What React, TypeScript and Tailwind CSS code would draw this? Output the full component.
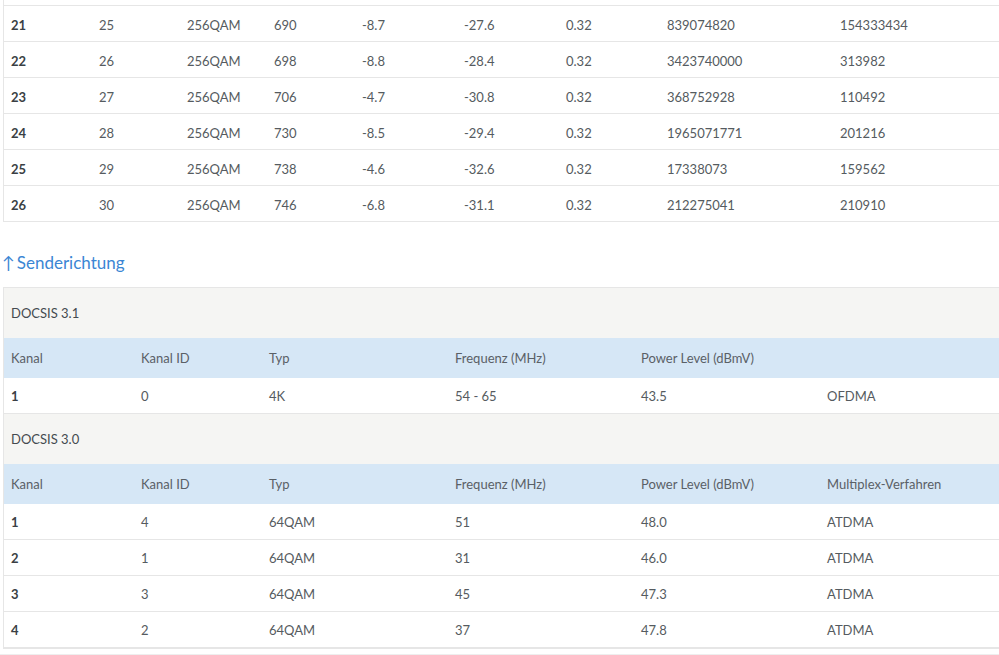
import React from "react";

const topRows = [
  ["21", "25", "256QAM", "690", "-8.7", "-27.6", "0.32", "839074820", "154333434"],
  ["22", "26", "256QAM", "698", "-8.8", "-28.4", "0.32", "3423740000", "313982"],
  ["23", "27", "256QAM", "706", "-4.7", "-30.8", "0.32", "368752928", "110492"],
  ["24", "28", "256QAM", "730", "-8.5", "-29.4", "0.32", "1965071771", "201216"],
  ["25", "29", "256QAM", "738", "-4.6", "-32.6", "0.32", "17338073", "159562"],
  ["26", "30", "256QAM", "746", "-6.8", "-31.1", "0.32", "212275041", "210910"],
];
const topWidths = ["w-[88px]", "w-[88px]", "w-[87px]", "w-[88px]", "w-[102px]", "w-[102px]", "w-[101px]", "w-[173px]", "w-[160px]"];
const lowWidths = ["w-[130px]", "w-[128px]", "w-[186px]", "w-[186px]", "w-[186px]", "w-[180px]"];

const up31 = [["1", "0", "4K", "54 - 65", "43.5", "OFDMA"]];
const up30 = [
  ["1", "4", "64QAM", "51", "48.0", "ATDMA"],
  ["2", "1", "64QAM", "31", "46.0", "ATDMA"],
  ["3", "3", "64QAM", "45", "47.3", "ATDMA"],
  ["4", "2", "64QAM", "37", "47.8", "ATDMA"],
];
const header = ["Kanal", "Kanal ID", "Typ", "Frequenz (MHz)", "Power Level (dBmV)", "Multiplex-Verfahren"];

function Row({ cells, widths, top }: { cells: string[]; widths: string[]; top?: boolean }) {
  return (
    <div
      className={`flex h-[36px] items-center border-b border-[#e6e6e6] pl-[7px] ${top ? "pt-[4px]" : "pt-[3px]"} text-[13px] text-[#555b60]`}
    >
      {cells.map((c, i) => (
        <div key={i} className={`${widths[i]} shrink-0 ${i === 0 ? "font-bold text-[#3a3f44]" : ""}`}>
          {c}
        </div>
      ))}
    </div>
  );
}

function Section({ title, rows, showLastHeader }: { title: string; rows: string[][]; showLastHeader: boolean }) {
  return (
    <>
      <div className="flex h-[50px] items-center bg-[#f5f5f3] pl-[7px] pt-[2px] text-[13px] text-[#444a4f]">{title}</div>
      <div className="flex h-[40px] items-center bg-[#d6e7f6] pl-[7px] pt-[2px] text-[13px] text-[#5a6066]">
        {header.map((h, i) => (
          <div key={i} className={`${lowWidths[i]} shrink-0`}>
            {i === 5 && !showLastHeader ? "" : h}
          </div>
        ))}
      </div>
      {rows.map((r, i) => (
        <Row key={i} cells={r} widths={lowWidths} />
      ))}
    </>
  );
}

export default function App() {
  return (
    <div className="h-[655px] w-[999px] overflow-hidden bg-white" style={{ fontFamily: "Lato, 'Noto Sans', sans-serif" }}>
      <div className="ml-[3px] w-[1010px] border-l border-[#e6e6e6]">
        <div className="h-[6px] border-b border-[#e6e6e6]" />
        {topRows.map((r, i) => (
          <Row key={i} cells={r} widths={topWidths} top />
        ))}
      </div>
      <div className="ml-[2px] flex h-[65px] items-center pt-[16px] text-[17px] text-[#3b86d4]">
        <span className="mr-[2px]">↑</span>Senderichtung
      </div>
      <div className="ml-[3px] w-[1010px] border-l border-t border-b border-[#e6e6e6]">
        <Section title="DOCSIS 3.1" rows={up31} showLastHeader={false} />
        <Section title="DOCSIS 3.0" rows={up30} showLastHeader={true} />
      </div>
      <div className="mt-[5px] border-t border-[#eeeeee]" />
    </div>
  );
}
